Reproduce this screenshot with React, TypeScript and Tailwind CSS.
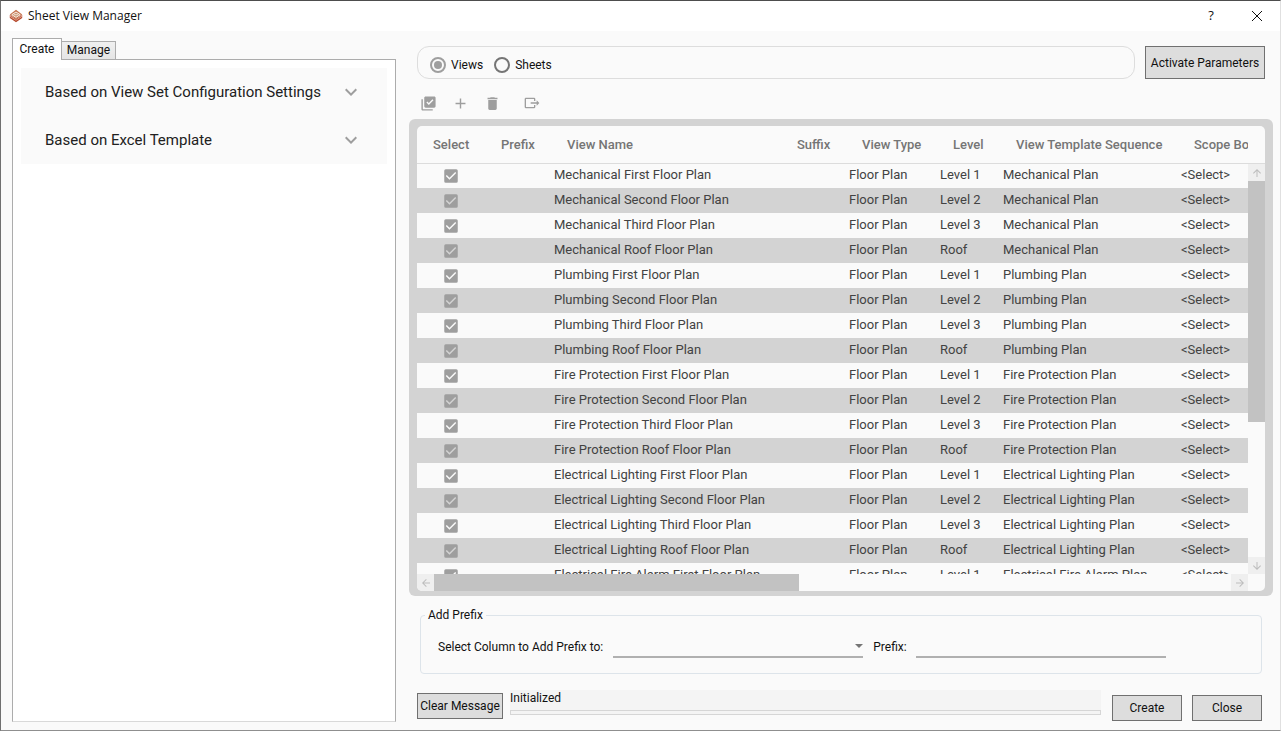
import React, { useState } from "react";
import {
  MdAdd,
  MdArrowBack,
  MdArrowDownward,
  MdArrowForward,
  MdArrowUpward,
  MdCheckBox,
  MdDelete,
  MdExpandMore,
  MdLibraryAddCheck,
} from "react-icons/md";

type Row = { name: string; level: string; template: string };

const groups = ["Mechanical", "Plumbing", "Fire Protection", "Electrical Lighting"];
const floors = [
  { floor: "First", level: "Level 1" },
  { floor: "Second", level: "Level 2" },
  { floor: "Third", level: "Level 3" },
  { floor: "Roof", level: "Roof" },
];

const rows: Row[] = [
  ...groups.flatMap((g) =>
    floors.map((f) => ({ name: `${g} ${f.floor} Floor Plan`, level: f.level, template: `${g} Plan` })),
  ),
  { name: "Electrical Fire Alarm First Floor Plan", level: "Level 1", template: "Electrical Fire Alarm Plan" },
];

function LogoIcon() {
  return (
    <svg viewBox="0 0 14 14" className="size-[14px]" aria-hidden="true">
      <path d="M.8 6 7 10l6.200-4v3L7 13.200.8 9z" fill="#b5482c" />
      <path d="M.8 7.200 7 11.200l6.200-4" fill="none" stroke="#f0cdbb" strokeWidth=".7" />
      <path d="M7 .8 13.200 5.600 7 10.200.8 5.600z" fill="#c4714c" />
      <path d="M7 3 11.200 5.700 7 8.400 2.800 5.700z" fill="#c99a78" stroke="#fbeee6" strokeWidth="1" />
      <path d="M5 5.700h4" stroke="#fbeee6" strokeWidth=".8" />
    </svg>
  );
}

function ExportIcon() {
  return (
    <svg viewBox="0 0 24 24" fill="currentColor" className="size-4" aria-hidden="true">
      <path d="M23 12l-4-4v3h-9v2h9v3M1 18V6c0-1.110.9-2 2-2h12a2 2 0 0 1 2 2v3h-2V6H3v12h12v-3h2v3a2 2 0 0 1-2 2H3a2 2 0 0 1-2-2z" />
    </svg>
  );
}

function Expander({ title }: { title: string }) {
  return (
    <button className="flex h-12 w-full items-center justify-between bg-[#fafafa] pr-6 pl-6 text-left text-[15px] text-[#212121]">
      {title}
      <MdExpandMore className="size-6 text-[#9e9e9e]" />
    </button>
  );
}

const pushButton = "border border-[#707070] bg-[#dddddd] text-[#111111]";
const th = "pl-4 text-left font-medium";
const td = "pl-[3px] pb-[2px]";

export default function App() {
  const [mode, setMode] = useState("views");
  return (
    <div className="flex h-screen flex-col overflow-hidden border border-t-[#4d4d4d] border-r-[#e0e0e0] border-b-[#8f8f8f] border-l-[#707070] bg-[#fafafa] font-[Roboto,sans-serif] text-[12px] text-[#111111]">
      <header className="flex h-[30px] shrink-0 items-center bg-white pl-2 font-['Open_Sans','Noto_Sans',sans-serif]">
        <LogoIcon />
        <h1 className="ml-[5px] flex-1 text-[12px]">Sheet View Manager</h1>
        <button className="w-[46px] text-[13px]" aria-label="Help">?</button>
        <button className="grid h-full w-[46px] place-items-center" aria-label="Close window">
          <svg viewBox="0 0 10 10" className="size-[10px]" stroke="#111111" aria-hidden="true">
            <path d="M0 0 10 10M10 0 0 10" />
          </svg>
        </button>
      </header>

      <div className="flex min-h-0 flex-1 pr-[7px] pb-2 pl-[11px]">
        <aside className="flex w-[384px] shrink-0 flex-col pt-[7px]">
          <div className="flex items-end" role="tablist">
            <button role="tab" aria-selected="true" className="z-10 -mb-px h-[22px] w-[50px] border border-b-0 border-[#acacac] bg-white pb-[2px]">
              Create
            </button>
            <button role="tab" aria-selected="false" className="h-[18px] w-[54px] border border-b-0 border-l-0 border-[#acacac] bg-linear-to-b from-[#f0f0f0] to-[#e5e5e5] pb-[2px] leading-4">
              Manage
            </button>
          </div>
          <div className="flex-1 border border-[#acacac] border-b-[#d9d9d9] bg-white p-2">
            <Expander title="Based on View Set Configuration Settings" />
            <Expander title="Based on Excel Template" />
          </div>
        </aside>

        <main className="ml-[13px] flex min-w-0 flex-1 flex-col pt-[15px] pb-px">
          <div className="flex gap-[10px] px-2">
            <div className="flex h-[33px] flex-1 items-center gap-[11px] rounded-xl border border-[#dddddd] px-3 pt-1">
              {[
                { id: "views", label: "Views" },
                { id: "sheets", label: "Sheets" },
              ].map((o) => (
                <label key={o.id} className="flex items-center gap-[5px]">
                  <span className="grid size-4 place-items-center">
                    <input
                      type="radio"
                      name="mode"
                      checked={mode === o.id}
                      onChange={() => setMode(o.id)}
                      className="peer col-start-1 row-start-1 size-4 appearance-none rounded-full border-2 border-[#757575] checked:border-[#9e9e9e]"
                    />
                    <span className="pointer-events-none col-start-1 row-start-1 hidden size-2 rounded-full bg-[#9e9e9e] peer-checked:block" />
                  </span>
                  {o.label}
                </label>
              ))}
            </div>
            <button className={`${pushButton} h-[33px] w-[120px]`}>Activate Parameters</button>
          </div>

          <div className="flex h-10 items-center pt-2 pl-[11px] text-[#9e9e9e]">
            <button aria-label="Select all" className="w-8"><MdLibraryAddCheck className="size-[17px]" /></button>
            <button aria-label="Add" className="w-8"><MdAdd className="size-[17px]" /></button>
            <button aria-label="Delete" className="w-10"><MdDelete className="size-[17px]" /></button>
            <button aria-label="Export"><ExportIcon /></button>
          </div>

          <div className="flex min-h-0 flex-1 rounded-md bg-[#d3d3d3] px-2 pt-[7px] pb-[5px]">
            <div className="flex min-w-0 flex-1 overflow-hidden rounded-[5px] bg-[#fafafa]">
              <div className="flex min-w-0 flex-1 flex-col">
                <div className="min-h-0 flex-1 overflow-hidden">
                  <table className="w-[1815px] table-fixed border-collapse text-[13px] text-[#424242]">
                    <colgroup>
                      <col className="w-[68px]" />
                      <col className="w-[66px]" />
                      <col className="w-[230px]" />
                      <col className="w-[65px]" />
                      <col className="w-[91px]" />
                      <col className="w-[63px]" />
                      <col className="w-[178px]" />
                      <col />
                    </colgroup>
                    <thead>
                      <tr className="h-[37px] border-b border-[#dcdcdc] text-[#757575]">
                        <th className={th}>Select</th>
                        <th className={th}>Prefix</th>
                        <th className={th}>View Name</th>
                        <th className={th}>Suffix</th>
                        <th className={th}>View Type</th>
                        <th className={th}>Level</th>
                        <th className={th}>View Template Sequence</th>
                        <th className={th}>Scope Box</th>
                      </tr>
                    </thead>
                    <tbody>
                      {rows.map((r) => (
                        <tr key={r.name} className="h-[25px] leading-5 even:bg-[#d3d3d3]">
                          <td>
                            <span className="mx-auto grid size-[18px] place-items-center">
                              <input
                                type="checkbox"
                                defaultChecked
                                aria-label={`Select ${r.name}`}
                                className="peer col-start-1 row-start-1 size-[14px] appearance-none rounded-xs border-2 border-[#9e9e9e] checked:border-0"
                              />
                              <MdCheckBox className="pointer-events-none col-start-1 row-start-1 hidden size-[18px] text-[#9e9e9e] peer-checked:block" />
                            </span>
                          </td>
                          <td className={td} />
                          <td className={td}>{r.name}</td>
                          <td className={td} />
                          <td className={td}>Floor Plan</td>
                          <td className={td}>{r.level}</td>
                          <td className={td}>{r.template}</td>
                          <td className={td}>&lt;Select&gt;</td>
                        </tr>
                      ))}
                    </tbody>
                  </table>
                </div>
                <div className="flex h-[17px] shrink-0 text-[#bdbdbd]">
                  <button aria-label="Scroll left" className="grid w-[17px] place-items-center bg-[#efefef]"><MdArrowBack className="size-3" /></button>
                  <div className="flex-1"><div className="h-full w-[45.8%] bg-[#c2c2c2]" /></div>
                  <button aria-label="Scroll right" className="grid w-[17px] place-items-center bg-[#efefef]"><MdArrowForward className="size-3" /></button>
                </div>
              </div>
              <div className="flex w-[17px] shrink-0 flex-col pt-[37px] pb-[17px] text-[#bdbdbd]">
                <div className="border-t border-[#dcdcdc]" />
                <button aria-label="Scroll up" className="grid h-[17px] place-items-center bg-[#efefef]"><MdArrowUpward className="size-3" /></button>
                <div className="flex-1"><div className="h-[64%] bg-[#c2c2c2]" /></div>
                <button aria-label="Scroll down" className="grid h-[17px] place-items-center bg-[#efefef]"><MdArrowDownward className="size-3" /></button>
              </div>
            </div>
          </div>

          <fieldset className="mt-[10px] mr-[11px] ml-[11px] h-[68px] rounded border border-[#dde4ea] pl-[17px]">
            <legend className="-ml-[13px] px-[3px] leading-[18px]">Add Prefix</legend>
            <div className="flex h-[46px] items-center">
              <label htmlFor="column">Select Column to Add Prefix to:</label>
              <span className="ml-[10px] grid h-[22px] w-[250px] items-center border-b-2 border-[#b0b0b0]">
                <select id="column" className="col-start-1 row-start-1 h-5 w-full appearance-none bg-transparent" />
                <svg viewBox="0 0 8 4" className="pointer-events-none col-start-1 row-start-1 h-1 w-2 justify-self-end" fill="#757575" aria-hidden="true">
                  <path d="M0 0h8L4 4z" />
                </svg>
              </span>
              <label htmlFor="prefix" className="ml-[10px]">Prefix:</label>
              <input id="prefix" type="text" className="ml-[9px] h-[22px] w-[250px] border-b-2 border-[#b0b0b0] bg-transparent outline-none" />
            </div>
          </fieldset>

          <footer className="mt-4 mr-[11px] flex items-start pl-2">
            <button className={`${pushButton} mt-[3px] h-[26px] w-[86px]`}>Clear Message</button>
            <div className="mr-[11px] ml-[7px] flex-1 bg-[#f4f4f4]">
              <p className="h-5 leading-4" role="status">Initialized</p>
              <div className="h-[5px] border border-[#d6d6d6] bg-[#f4f4f4]" />
            </div>
            <div className="mt-[5px] flex gap-[10px]">
              <button className={`${pushButton} h-[26px] w-[70px]`}>Create</button>
              <button className={`${pushButton} h-[26px] w-[70px]`}>Close</button>
            </div>
          </footer>
        </main>
      </div>
    </div>
  );
}
